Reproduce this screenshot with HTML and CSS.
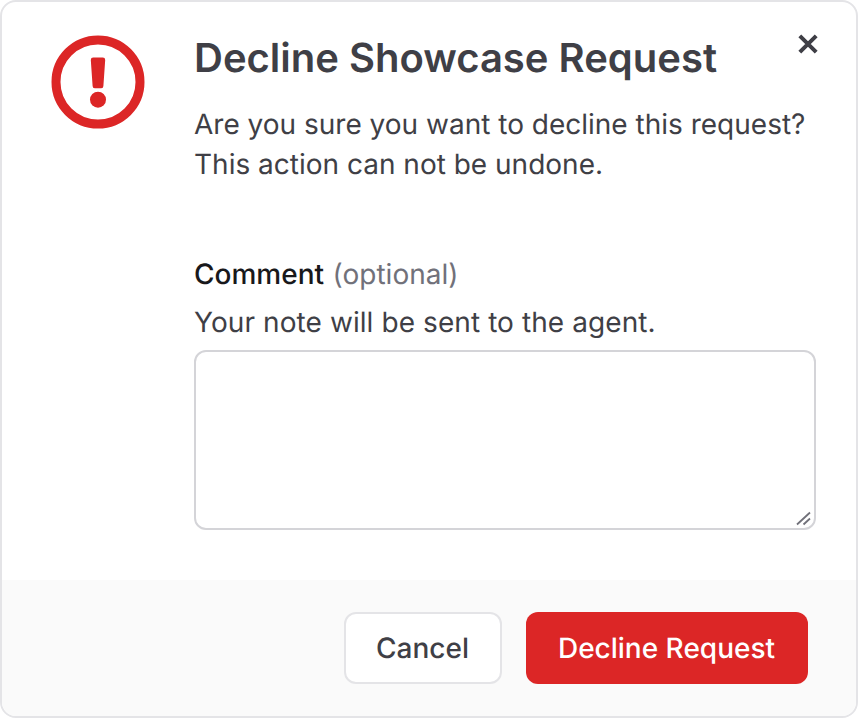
FILE: index.html
```html
<!DOCTYPE html>
<html lang="en">
<head>
<meta charset="utf-8">
<title>Decline Showcase Request</title>
<link rel="stylesheet" href="styles.css">
</head>
<body>
<div class="modal">
  <div class="main">
    <svg class="alert" width="96" height="96" viewBox="0 0 96 96" aria-hidden="true">
      <circle cx="48" cy="48" r="42" fill="none" stroke="#dc2626" stroke-width="9"/>
      <path d="M40.800 26a2.400 2.400 0 0 1 2.400-2.400h9.600a2.400 2.400 0 0 1 2.400 2.400L53.400 52a2.200 2.200 0 0 1-2.200 2.200h-6.400a2.200 2.200 0 0 1-2.200-2.200z" fill="#dc2626"/>
      <circle cx="48" cy="65.700" r="8" fill="#dc2626"/>
    </svg>
    <div class="content">
      <h1 class="title">Decline Showcase Request</h1>
      <p class="lead">Are you sure you want to decline this request?<br>This action can not be undone.</p>
      <div class="field">
        <label class="label" for="comment">Comment <span class="optional">(optional)</span></label>
        <p class="hint">Your note will be sent to the agent.</p>
        <div class="area-wrap">
          <textarea class="area" id="comment"></textarea>
          <svg class="grip" width="16" height="16" viewBox="0 0 16 16" aria-hidden="true">
            <path d="M1 14.500 14 2.500M7.500 14.500 14 8.500" stroke="#71717a" stroke-width="1.800" fill="none"/>
          </svg>
        </div>
      </div>
    </div>
    <button class="close" type="button" aria-label="Close">
      <svg width="20" height="20" viewBox="0 0 20 20" aria-hidden="true">
        <path d="M1.800 1.800l16.400 16.400M18.200 1.800l-16.400 16.400" stroke="#3f3f46" stroke-width="4" fill="none"/>
      </svg>
    </button>
  </div>
  <div class="footer">
    <button class="btn btn-cancel" type="button">Cancel</button>
    <button class="btn btn-danger" type="button">Decline Request</button>
  </div>
</div>
</body>
</html>
```
FILE: styles.css
```css
* { box-sizing: border-box; }
html, body { margin: 0; padding: 0; background: #fff; }
body {
  font-family: Inter, "Liberation Sans", sans-serif;
  color: #3f3f46;
  text-rendering: geometricPrecision;
}
.modal {
  width: 858px;
  height: 718px;
  border: 2px solid #e4e4e7;
  border-radius: 16px;
  overflow: hidden;
  display: flex;
  flex-direction: column;
  background: #fff;
}
.main {
  position: relative;
  flex: 1;
  display: flex;
  gap: 48px;
  padding: 32px 40px 48px 48px;
}
.alert { flex: none; }
.content { flex: 1; min-width: 0; }
.title { margin: 0; font-size: 40px; line-height: 48px; font-weight: 600; }
.lead { margin: 22px 0 0; font-size: 28px; line-height: 40px; }
.field { margin-top: 70px; }
.label { display: block; font-size: 28px; line-height: 40px; font-weight: 500; color: #18181b; }
.optional { font-weight: 400; color: #71717a; letter-spacing: 0.03px; margin-left: 1px; }
.hint { margin: 8px 0 0; font-size: 28px; line-height: 40px; letter-spacing: 0.085px; }
.area-wrap { position: relative; margin-top: 8px; height: 180px; }
.area {
  display: block;
  width: 622px;
  height: 180px;
  border: 2px solid #d4d4d8;
  border-radius: 12px;
  background: #fff;
  resize: none;
  outline: none;
}
.grip { position: absolute; left: 602px; top: 160px; }
.close {
  position: absolute;
  right: 38px;
  top: 32px;
  padding: 0;
  border: 0;
  background: none;
  display: flex;
}
.footer {
  flex: none;
  height: 136px;
  background: #fafafa;
  display: flex;
  gap: 24px;
  justify-content: flex-end;
  padding: 32px 48px;
}
.btn {
  height: 72px;
  border-radius: 12px;
  font-family: inherit;
  font-size: 28px;
  font-weight: 500;
  text-rendering: geometricPrecision;
  padding: 0 1px 0 0;
}
.btn-cancel { width: 158px; background: #fff; border: 2px solid #e4e4e7; color: #3f3f46; }
.btn-danger { width: 282px; background: #dc2626; border: 0; color: #fff; }
```
